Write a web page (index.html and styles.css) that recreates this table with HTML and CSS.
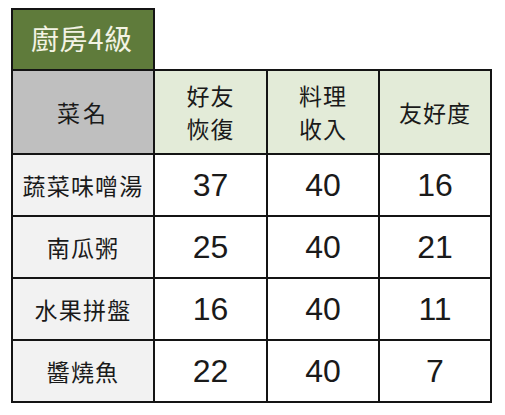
FILE: index.html
```html
<!DOCTYPE html>
<html lang="zh-Hant">
<head>
<meta charset="utf-8">
<link rel="stylesheet" href="styles.css">
</head>
<body>
<div class="wrap">
  <div class="title">廚房4級</div>
  <table class="grid">
    <colgroup>
      <col class="c1"><col class="c2"><col class="c3"><col class="c4">
    </colgroup>
    <tr class="head">
      <th class="name-h">菜名</th>
      <th>好友<br>恢復</th>
      <th>料理<br>收入</th>
      <th>友好度</th>
    </tr>
    <tr><td class="name">蔬菜味噌湯</td><td>37</td><td>40</td><td>16</td></tr>
    <tr><td class="name">南瓜粥</td><td>25</td><td>40</td><td>21</td></tr>
    <tr><td class="name">水果拼盤</td><td>16</td><td>40</td><td>11</td></tr>
    <tr><td class="name">醬燒魚</td><td>22</td><td>40</td><td>7</td></tr>
  </table>
</div>
</body>
</html>
```
FILE: styles.css
```css
html, body {
  margin: 0;
  padding: 0;
  background: #ffffff;
}
.wrap {
  padding: 8px 0 0 11px;
  font-family: "Noto Sans CJK TC", "Noto Sans CJK SC", sans-serif;
  color: #1a1a1a;
}
.title {
  box-sizing: border-box;
  width: 144px;
  height: 61px;
  border: 2.5px solid #141414;
  border-bottom: none;
  background: #5f7b3b;
  color: #f3f3e4;
  font-size: 28px;
  line-height: 57px;
  padding-left: 18px;
  letter-spacing: 0.5px;
}
.grid {
  border-collapse: collapse;
  table-layout: fixed;
  width: 481px;
}
.c1 { width: 142px; }
.c2 { width: 113px; }
.c3 { width: 112px; }
.c4 { width: 112px; }
.grid th, .grid td {
  border: 2.5px solid #141414;
  text-align: center;
  padding: 0;
}
.head th {
  height: 82px;
  font-weight: normal;
  font-size: 23px;
  line-height: 33px;
  letter-spacing: 1px;
  background: #e3ebd8;
}
.head th.name-h {
  background: #bfbfbf;
  letter-spacing: 3px;
}
.grid td {
  height: 60px;
  font-family: "Liberation Sans", "DejaVu Sans", sans-serif;
  font-size: 32px;
  background: #ffffff;
}
.grid td.name {
  font-family: "Noto Sans CJK TC", sans-serif;
  font-size: 23px;
  background: #f2f2f2;
  letter-spacing: 1.2px;
}
```
